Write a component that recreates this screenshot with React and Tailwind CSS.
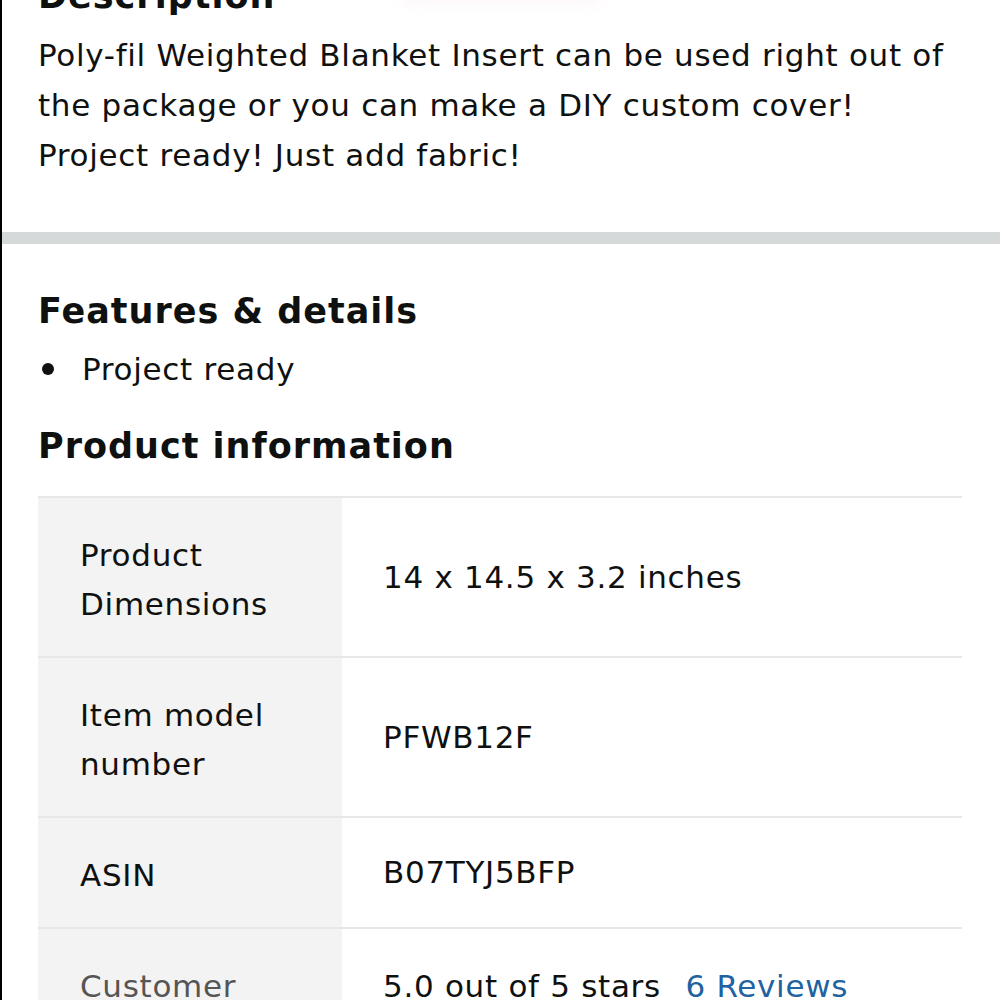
const rows = [
  { label: ['Product', 'Dimensions'], value: '14 x 14.5 x 3.2 inches' },
  { label: ['Item model', 'number'], value: 'PFWB12F' },
  { label: ['ASIN'], value: 'B07TYJ5BFP' },
];

function InfoRow({ label, children, muted, top }) {
  return (
    <div className="flex border-t-2 border-[#e7e7e7]">
      <div className={`w-[304px] shrink-0 bg-[#f3f3f3] pl-[42px] pr-4 pt-[33px] pb-[27px] leading-[49px] ${muted ? 'text-[#555]' : ''}`}>
        {label.map((l) => (
          <div key={l}>{l}</div>
        ))}
      </div>
      <div className={`flex flex-1 pl-[41px] pr-4 leading-[49px] ${top ? 'items-start pt-[33px]' : 'items-center'}`}>{children}</div>
    </div>
  );
}

export default function App() {
  return (
    <div
      className="relative min-h-screen overflow-hidden border-l-2 border-black bg-white text-[#0f1111] tracking-[0.7px]"
      style={{ fontFamily: '"DejaVu Sans", "Open Sans", sans-serif' }}
    >
      {/* faint shadow of the sticky button above */}
      <div className="pointer-events-none absolute -top-[26px] left-[400px] h-[24px] w-[200px] rounded-full shadow-[0_4px_16px_rgba(230,160,180,0.12)]" />

      <section className="px-[36px]">
        <h2 className="-mt-[24px] text-[35px] font-bold leading-[40px] tracking-[1px]">Description</h2>
        <p className="mt-[14px] text-[31px] leading-[50px]">
          Poly-fil Weighted Blanket Insert can be used right out of the package or you can make a DIY custom cover!
          Project ready! Just add fabric!
        </p>
      </section>

      <div className="mt-[52px] h-[12px] bg-[#d5d9d9]" />

      <section className="px-[36px] pt-[47px]">
        <h2 className="text-[35px] font-bold leading-[40px] tracking-[1px]">Features &amp; details</h2>
        <ul className="mt-[14px] text-[31px] leading-[48px]">
          <li className="flex items-center">
            <span className="ml-[4px] mr-[28px] h-[12px] w-[12px] rounded-full bg-[#0f1111]" />
            Project ready
          </li>
        </ul>

        <h2 className="mt-[33px] text-[35px] font-bold leading-[40px] tracking-[1px]">Product information</h2>

        <div className="mt-[30px] mr-[2px] text-[31px]">
          {rows.map((r) => (
            <InfoRow key={r.value} label={r.label}>
              {r.value}
            </InfoRow>
          ))}
          <InfoRow label={['Customer', 'Reviews']} muted top>
            <span>
              5.0 out of 5 stars <span className="ml-[14px] text-[#2162a1]">6 Reviews</span>
            </span>
          </InfoRow>
        </div>
      </section>
    </div>
  );
}
